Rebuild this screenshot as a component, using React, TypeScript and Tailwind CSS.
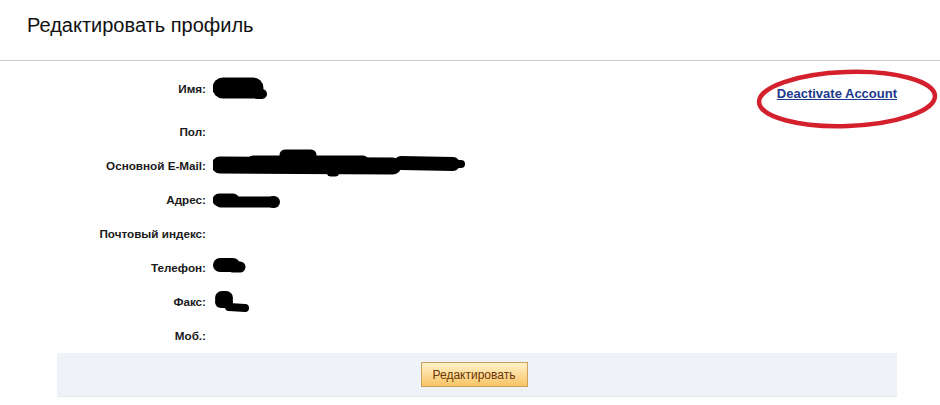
import type { ReactNode } from 'react';

type Stroke = [number, number, number, number, number];

// redaction scribbles, drawn as thick round-capped strokes
const scribbles: Record<string, Stroke[]> = {
  name: [
    [10, 16, 40, 16, 21],
    [44, 22, 49, 22, 10],
  ],
  email: [
    [7, 16, 180, 17, 17],
    [72, 6, 98, 6, 11],
    [40, 12, 150, 12, 11],
    [188, 14, 240, 15, 14],
    [240, 15, 248, 15, 8],
    [118, 23, 122, 23, 9],
  ],
  address: [
    [6, 17, 20, 17, 13],
    [8, 19, 60, 19, 11],
    [60, 19, 61, 19, 12],
  ],
  phone: [
    [7, 14, 20, 14, 14],
    [20, 16, 27, 16, 11],
  ],
  fax: [
    [9, 13, 13, 13, 14],
    [8, 17, 14, 17, 12],
    [16, 22, 32, 23, 8],
  ],
};

function Scribble({ kind }: { kind: string }) {
  return (
    <svg width="260" height="34" viewBox="0 0 260 34" className="block">
      {scribbles[kind].map(([x1, y1, x2, y2, w], i) => (
        <line
          key={i}
          x1={x1}
          y1={y1}
          x2={x2}
          y2={y2}
          stroke="#000"
          strokeWidth={w}
          strokeLinecap="round"
        />
      ))}
    </svg>
  );
}

const rows: { label: string; value?: string }[] = [
  { label: 'Имя:', value: 'name' },
  { label: 'Пол:' },
  { label: 'Основной E-Mail:', value: 'email' },
  { label: 'Адрес:', value: 'address' },
  { label: 'Почтовый индекс:' },
  { label: 'Телефон:', value: 'phone' },
  { label: 'Факс:', value: 'fax' },
  { label: 'Моб.:' },
];

function Row({ label, children, first }: { label: string; children?: ReactNode; first?: boolean }) {
  return (
    <div className={first ? 'flex h-[34px] items-center mb-[9px]' : 'flex h-[34px] items-center'}>
      <div className="w-[206px] text-right text-[11.7px] font-bold leading-[14px] text-[#1a1a1a]">
        {label}
      </div>
      <div className="pl-[7px]">{children}</div>
    </div>
  );
}

export default function App() {
  return (
    <div className="w-[940px] h-[405px] bg-white font-['Liberation_Sans',Arial,sans-serif] overflow-hidden">
      <div className="h-[61px] border-b border-[#cccccc] pl-[27px] pt-[15px]">
        <h1 className="text-[20px] leading-[20px] font-normal text-[#111]">Редактировать профиль</h1>
      </div>

      <div className="flex justify-between pr-[43px]">
        <div className="pt-[11px]">
          {rows.map((r, i) => (
            <Row key={r.label} label={r.label} first={i === 0}>
              {r.value ? <Scribble kind={r.value} /> : null}
            </Row>
          ))}
        </div>
        <div className="pt-[25px]">
          <div className="relative">
            <a
              href="#"
              className="block text-[13px] leading-[15px] font-bold text-[#1b3a8c] underline"
            >
              Deactivate Account
            </a>
            <svg
              width="180"
              height="58"
              viewBox="0 0 180 58"
              className="absolute left-[-20px] top-[-16px] overflow-visible pointer-events-none"
            >
              <ellipse
                cx="90"
                cy="29"
                rx="88"
                ry="27"
                fill="none"
                stroke="#d4202c"
                strokeWidth="4.5"
                transform="rotate(-2 90 29)"
              />
            </svg>
          </div>
        </div>
      </div>

      <div className="ml-[57px] w-[840px] h-[44px] bg-[#eff3f8] border-b border-[#e6eaf0] flex items-center justify-center pr-[6px]">
        <button className="w-[107px] h-[25px] border border-[#caa05a] bg-gradient-to-b from-[#fff2c8] to-[#f7c463] text-[12px] text-[#6b3505] leading-[14px]">
          Редактировать
        </button>
      </div>
    </div>
  );
}
